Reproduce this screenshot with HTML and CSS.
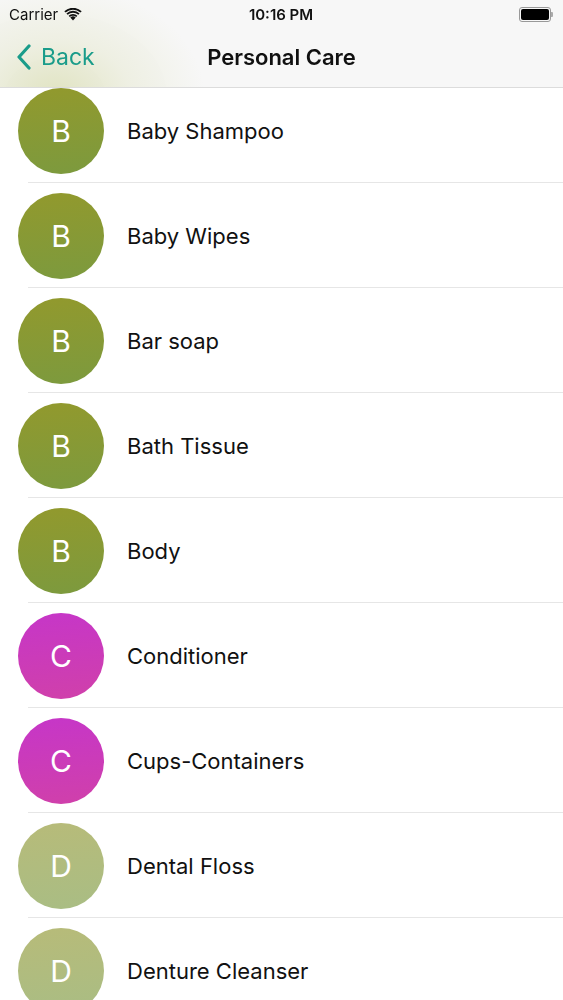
FILE: index.html
```html
<!DOCTYPE html>
<html lang="en">
<head>
    <meta charset="UTF-8">
    <meta name="viewport" content="width=device-width, initial-scale=1.0">
    <title>Personal Care</title>
    <link rel="stylesheet" href="styles.css">
</head>
<body>

    <div class="topbar">
        <div class="status">
            <div class="status-left">
                <span>Carrier</span>
                <svg class="wifi" width="18" height="13" viewBox="0 0 18 13">
                    <path d="M9 12.5 L6.3 9.6 A4 4 0 0 1 11.7 9.6 Z" fill="#111"/>
                    <path d="M4.6 7.8 A6.4 6.4 0 0 1 13.4 7.8 L12.2 9.1 A4.6 4.6 0 0 0 5.8 9.1 Z" fill="#111"/>
                    <path d="M2.4 5.5 A9.6 9.6 0 0 1 15.6 5.5 L14.3 6.8 A7.8 7.8 0 0 0 3.7 6.8 Z" fill="#111"/>
                    <path d="M0.3 3.3 A12.6 12.6 0 0 1 17.7 3.3 L16.4 4.6 A10.8 10.8 0 0 0 1.6 4.6 Z" fill="#111"/>
                </svg>
            </div>
            <div class="time">10:16 PM</div>
            <div class="battery">
                <div class="battery-body"><div class="battery-fill"></div></div>
                <div class="battery-tip"></div>
            </div>
        </div>
        <div class="navbar">
            <div class="back">
                <svg width="16" height="26" viewBox="0 0 16 26">
                    <path d="M13 2 L3 13 L13 24" fill="none" stroke="#1a9c8a" stroke-width="3.2" stroke-linecap="round" stroke-linejoin="round"/>
                </svg>
                <span>Back</span>
            </div>
            <div class="title">Personal Care</div>
        </div>
    </div>

    <ul class="list">
        <li class="row"><div class="avatar b">B</div><div class="name">Baby Shampoo</div></li>
        <li class="row"><div class="avatar b">B</div><div class="name">Baby Wipes</div></li>
        <li class="row"><div class="avatar b">B</div><div class="name">Bar soap</div></li>
        <li class="row"><div class="avatar b">B</div><div class="name">Bath Tissue</div></li>
        <li class="row"><div class="avatar b">B</div><div class="name">Body</div></li>
        <li class="row"><div class="avatar c">C</div><div class="name">Conditioner</div></li>
        <li class="row"><div class="avatar c">C</div><div class="name">Cups-Containers</div></li>
        <li class="row"><div class="avatar d">D</div><div class="name">Dental Floss</div></li>
        <li class="row"><div class="avatar d">D</div><div class="name">Denture Cleanser</div></li>
    </ul>

</body>
</html>
```

FILE: styles.css
```css
body {
    margin: 0;
    font-family: 'Inter', 'Liberation Sans', sans-serif;
    background: #fff;
    color: #111;
    overflow: hidden;
}

/* header sits over the scrolled list */
.topbar {
    position: fixed;
    top: 0;
    left: 0;
    right: 0;
    height: 87px;
    z-index: 2;
    border-bottom: 1px solid #dcdcdc;
    background:
        radial-gradient(ellipse 150px 110px at 55px 95px, rgba(175, 185, 80, 0.32), rgba(175, 185, 80, 0.12) 50%, rgba(175, 185, 80, 0) 100%),
        rgba(247, 247, 247, 0.97);
}

.status {
    height: 28px;
    display: flex;
    align-items: center;
    justify-content: space-between;
    padding: 0 10px 0 9px;
    font-size: 15px;
}

.status-left {
    display: flex;
    align-items: center;
    gap: 6px;
    width: 120px;
}

.time {
    font-weight: 600;
}

.battery {
    width: 120px;
    display: flex;
    justify-content: flex-end;
    align-items: center;
}

.battery-body {
    width: 28px;
    height: 11px;
    border: 1px solid #999;
    border-radius: 3px;
    padding: 1px;
}

.battery-fill {
    width: 100%;
    height: 100%;
    background: #000;
    border-radius: 2px;
}

.battery-tip {
    width: 2px;
    height: 5px;
    background: #aaa;
    border-radius: 0 1px 1px 0;
}

.navbar {
    height: 59px;
    display: flex;
    align-items: center;
    justify-content: center;
    position: relative;
}

.back {
    position: absolute;
    left: 16px;
    top: 15px;
    display: flex;
    align-items: center;
    gap: 9px;
    color: #1a9c8a;
    font-size: 23px;
}

.title {
    font-size: 22px;
    font-weight: 600;
    margin-top: -1px;
}

.list {
    list-style: none;
    margin: 0;
    padding: 78px 0 0 0;
}

.row {
    height: 105px;
    display: flex;
    align-items: center;
    position: relative;
}

.row::after {
    content: "";
    position: absolute;
    left: 28px;
    right: 0;
    bottom: 0;
    height: 1px;
    background: #e6e6e6;
}

.avatar {
    width: 86px;
    height: 86px;
    border-radius: 50%;
    margin-left: 18px;
    display: flex;
    align-items: center;
    justify-content: center;
    color: #fff;
    font-size: 30px;
    flex-shrink: 0;
}

.avatar.b {
    background: linear-gradient(175deg, #92992d, #7c9a3e);
}

.avatar.c {
    background: linear-gradient(175deg, #c636c8, #d040aa);
}

.avatar.d {
    background: linear-gradient(175deg, #b7bb79, #a9bd84);
}

.name {
    margin-left: 23px;
    font-size: 22px;
    color: #111;
}
```
